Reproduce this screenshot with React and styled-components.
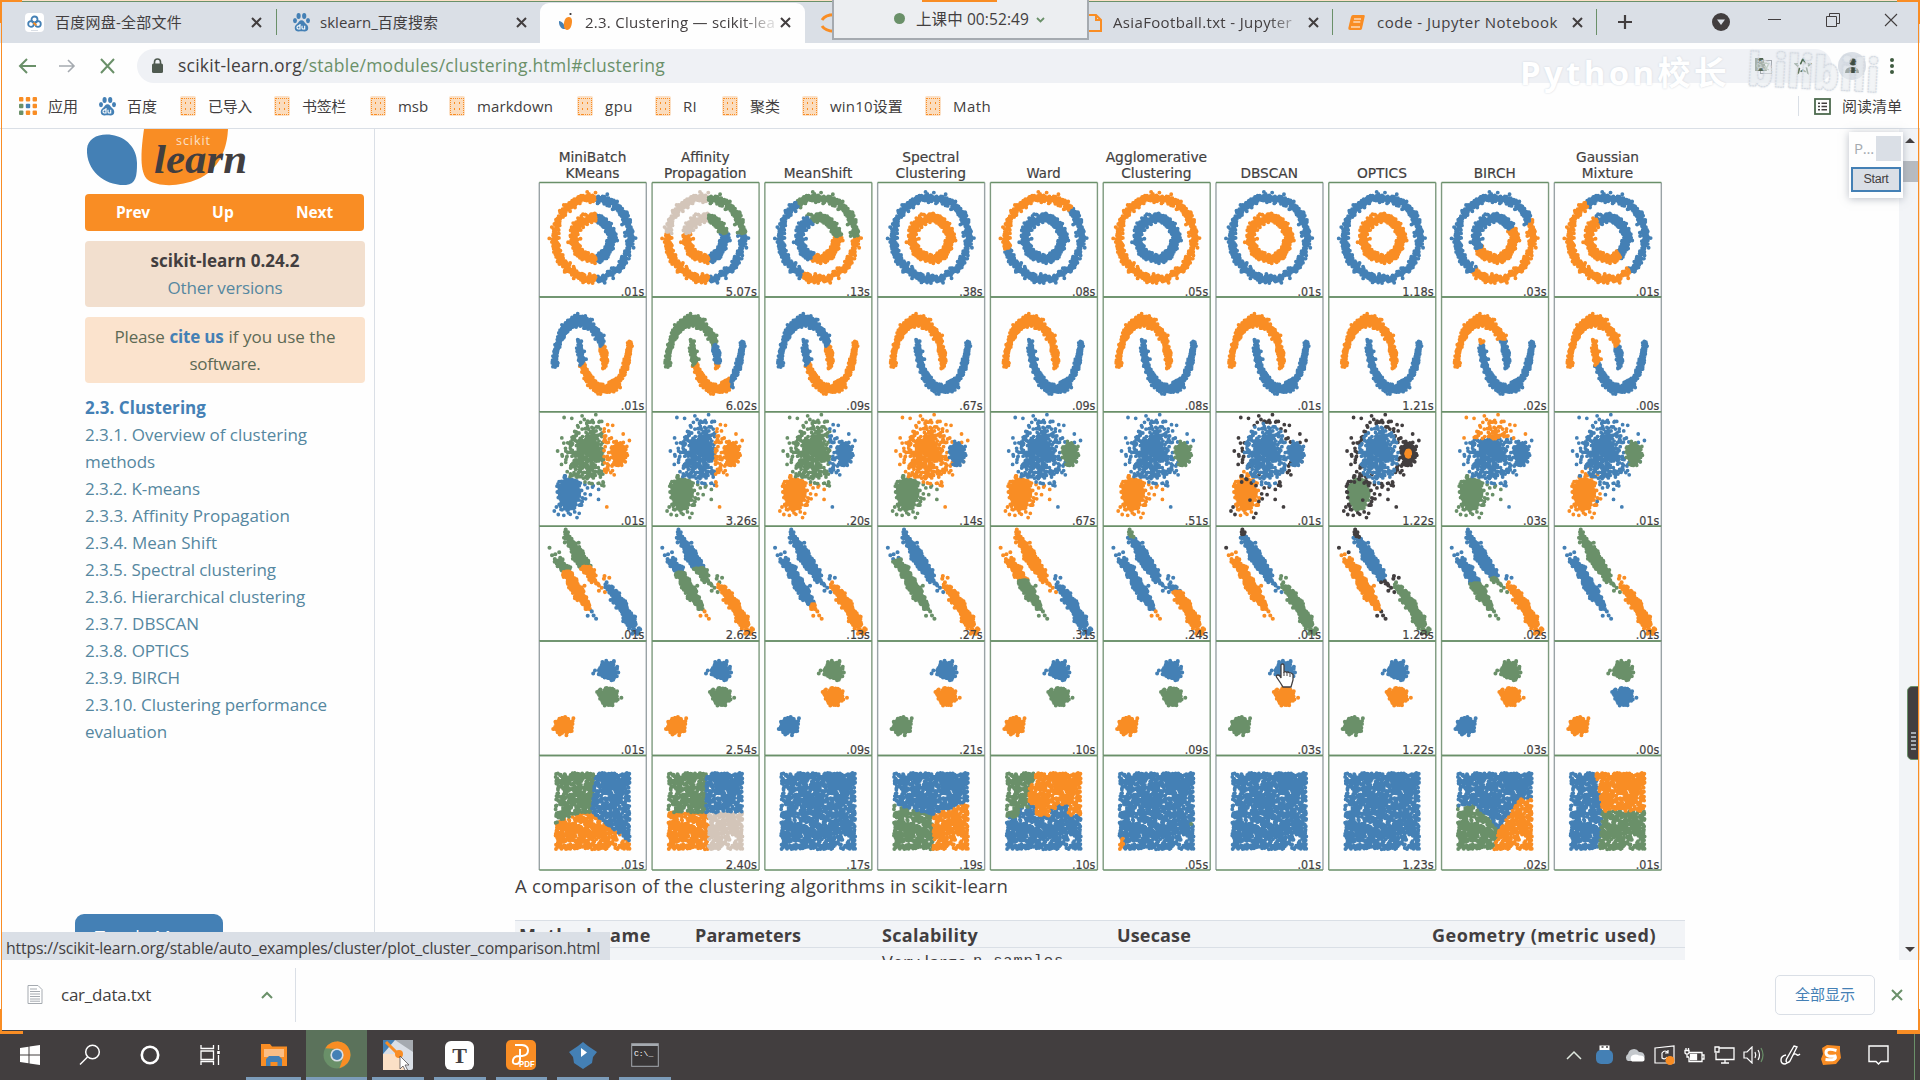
import React, { useLayoutEffect, useRef, useState } from "react";
import styled, { createGlobalStyle, css } from "styled-components";

const c = {
  white: "#fefefe",
  strip: "#dadfe6",
  pale: "#eff1f5",
  faint: "#f2f4f7",
  line: "#dadfe6",
  grey: "#a5aab0",
  ink: "#423e3f",
  blue: "#4480b5",
  orange: "#f98d24",
  green: "#6a9069",
  peach: "#fbe0c6",
  link: "#5587a0",
  noise: "#d3c5b9",
};

const Global = createGlobalStyle`
  * { box-sizing: border-box; }
  body {
    margin: 0;
    width: 1920px;
    height: 1080px;
    overflow: hidden;
    color: ${c.ink};
    font-family: "Open Sans", "Noto Sans CJK SC", sans-serif;
  }
`;

/* ---------- text that keeps a fixed run width ---------- */

const Run = styled.span`
  display: inline-block;
  white-space: nowrap;
  line-height: 1;
  flex: none;
  font-size: ${(p) => p.$size || 15}px;
  font-weight: ${(p) => (p.$bold ? 700 : 400)};
  color: ${(p) => p.$color || "inherit"};
  font-family: ${(p) => p.$font || "inherit"};
`;

function Fit({ w, children, size, bold, color, font }) {
  const ref = useRef(null);
  const [spacing, setSpacing] = useState(0);
  useLayoutEffect(() => {
    const el = ref.current;
    const n = el.textContent.length;
    setSpacing((w - el.getBoundingClientRect().width) / n);
  }, [w]);
  return (
    <Run ref={ref} $size={size} $bold={bold} $color={color} $font={font} style={{ letterSpacing: spacing }}>
      {children}
    </Run>
  );
}

/* ---------- window frame ---------- */

const Screen = styled.div`
  position: relative;
  width: 1920px;
  height: 1080px;
  overflow: hidden;
  display: flex;
  flex-direction: column;
  background: ${c.white};
`;

const TabStrip = styled.div`
  height: 43px;
  flex: none;
  display: flex;
  background: ${c.strip};
  border-top: 1px solid ${c.peach};
  box-shadow: inset 0 1px 0 ${c.green};
`;

const Tab = styled.div`
  width: ${(p) => p.$w}px;
  flex: none;
  padding: 1px ${(p) => p.$pr || 12}px 0 ${(p) => p.$pl || 16}px;
  display: flex;
  align-items: center;
  border-right: 1px solid ${(p) => (p.$line ? c.green : "transparent")};
  border-image: ${(p) => (p.$line ? `linear-gradient(transparent 20%, ${c.green} 20%, ${c.green} 80%, transparent 80%) 1` : "none")};
  ${(p) =>
    p.$active &&
    css`
      background: ${c.white};
      border-radius: 9px 9px 0 0;
      margin-top: 2px;
      padding-top: 0;
      padding-bottom: 1px;
    `}
`;

const TabIcon = styled.span`
  width: ${(p) => p.$w || 19}px;
  height: 19px;
  margin-right: ${(p) => p.$gap || 11}px;
  flex: none;
  display: flex;
  align-items: center;
  justify-content: center;
`;

const TabTitle = styled.span`
  flex: 1;
  display: flex;
  overflow: hidden;
  padding: 4px 0;
  mask-image: ${(p) => (p.$fade ? "linear-gradient(90deg, #000 80%, rgba(0,0,0,.2) 95%)" : "none")};
`;

const StripControls = styled.div`
  flex: 1;
  min-width: 0;
  display: grid;
  grid-template-columns: 56px 136px minmax(0, 1fr);
  justify-items: center;
  align-items: center;
`;

const WindowButtons = styled.div`
  width: 130px;
  display: flex;
  justify-content: space-between;
  align-items: center;
  justify-self: end;
  margin-right: 22px;
  padding-bottom: 4px;
`;

const Toolbar = styled.div`
  height: 43px;
  flex: none;
  display: flex;
  align-items: center;
  padding: 2px 20px 0 17px;
`;

const NavButtons = styled.div`
  display: flex;
  gap: 20px;
  width: 120px;
`;

const Address = styled.div`
  width: 1695px;
  height: 34px;
  border-radius: 17px;
  background: ${c.pale};
  display: flex;
  align-items: center;
  padding: 0 20px 0 13px;
`;

const Url = styled.div`
  flex: 1;
  display: flex;
  margin-left: 14px;
`;

const AddressActions = styled.div`
  display: flex;
  gap: 22px;
`;

const ToolbarEnd = styled.div`
  flex: 1;
  display: flex;
  align-items: center;
  justify-content: space-between;
  padding-left: 6px;
`;

const Avatar = styled.div`
  width: 28px;
  height: 28px;
  border-radius: 50%;
  background: ${c.strip};
  display: flex;
  align-items: center;
  justify-content: center;
`;

const Bookmarks = styled.div`
  height: 43px;
  flex: none;
  display: flex;
  align-items: center;
  padding: 0 18px 2px 19px;
  border-bottom: 1px solid ${c.line};
`;

const Bookmark = styled.div`
  width: ${(p) => p.$w}px;
  display: flex;
  align-items: center;
`;

const MarkIcon = styled.span`
  width: ${(p) => p.$w || 28}px;
  display: flex;
  flex: none;
`;

const Folder = styled.i`
  width: 16px;
  height: 20px;
  background: ${c.peach};
  border-radius: 2px;
  display: flex;
  align-items: center;
  justify-content: center;
  &::after {
    content: "";
    width: 12px;
    height: 15px;
    border: 1px dotted ${c.orange};
    background: radial-gradient(${c.orange} 0.5px, #fbdcbd 0.8px) 1px 1px / 5px 6px;
  }
`;

const ReadingList = styled.div`
  margin-left: auto;
  width: 104px;
  height: 20px;
  border-left: 1px solid ${c.line};
  display: flex;
  align-items: center;
  justify-content: space-between;
  padding-left: 15px;
`;

/* ---------- page ---------- */

const Page = styled.main`
  height: 831px;
  flex: none;
  display: flex;
  overflow: hidden;
`;

const Sidebar = styled.aside`
  width: 375px;
  border-right: 1px solid ${c.line};
  padding: 0 9px 0 85px;
  display: flex;
  flex-direction: column;
`;

const Logo = styled.div`
  height: 65px;
  flex: none;
`;

const Pager = styled.nav`
  height: 37px;
  width: 279px;
  flex: none;
  border-radius: 4px;
  background: ${c.orange};
  display: flex;
  align-items: center;
  justify-content: space-between;
  padding: 1px 31px 0;
`;

const Notice = styled.div`
  width: 280px;
  height: ${(p) => p.$h}px;
  flex: none;
  margin-top: 10px;
  border-radius: 4px;
  background: ${(p) => p.$bg};
  display: flex;
  flex-direction: column;
  align-items: center;
  justify-content: center;
`;

const Line = styled.div`
  height: 27px;
  flex: none;
  display: flex;
  align-items: center;
  gap: ${(p) => p.$gap || 0}px;
`;

const Toc = styled.div`
  margin-top: 11px;
`;

const MenuToggle = styled.div`
  margin: auto 0 0 -10px;
  width: 148px;
  height: 46px;
  flex: none;
  border-radius: 9px 9px 0 0;
  background: ${c.blue};
  color: ${c.white};
  display: flex;
  align-items: center;
  justify-content: center;
`;

const Article = styled.section`
  width: 1524px;
  padding: 11px 0 0 140px;
  display: flex;
  flex-direction: column;
`;

const Figure = styled.svg`
  display: block;
  flex: none;
  margin-left: 18px;
`;

const Caption = styled.div`
  height: 48px;
  flex: none;
  padding-top: 4px;
`;

const Table = styled.div`
  width: 1170px;
  flex: none;
`;

const Row = styled.div`
  display: grid;
  grid-template-columns: 176px 187px 235px 315px 1fr;
  height: 27px;
  align-items: center;
  padding: 2px 0 0 4px;
  border-top: 1px solid ${c.line};
  background: ${c.faint};
`;

const Cell = styled.div`
  grid-column: ${(p) => p.$col || "auto"};
  display: flex;
  align-items: center;
  gap: 6px;
`;

const Scroll = styled.div`
  width: 21px;
  background: ${c.faint};
  border-right: 2px solid ${c.peach};
  display: flex;
  flex-direction: column;
  align-items: center;
  padding: 9px 0 8px 3px;
`;

const Thumb = styled.div`
  width: 15px;
  height: 21px;
  margin: 18px 0 auto;
  background: #b7bbc1;
`;

const Arrow = styled.i`
  border: 5px solid transparent;
  border-width: ${(p) => (p.$down ? "5px 5px 0" : "0 5px 5px")};
  border-color: ${c.ink} transparent;
`;

/* ---------- download shelf + taskbar ---------- */

const Shelf = styled.footer`
  height: 70px;
  flex: none;
  display: flex;
  align-items: center;
  padding: 0 17px 0 27px;
`;

const Download = styled.div`
  width: 269px;
  height: 54px;
  border-right: 1px solid ${c.line};
  display: flex;
  align-items: center;
  padding: 0 22px 1px 0;
  gap: 18px;
  & > :last-child {
    margin-left: auto;
  }
`;

const ShowAll = styled.button`
  margin: 0 16px 0 auto;
  width: 100px;
  height: 40px;
  border: 1px solid ${c.line};
  border-radius: 5px;
  background: ${c.white};
  padding: 0;
  font-family: inherit;
`;

const Taskbar = styled.div`
  height: 50px;
  flex: none;
  background: ${c.ink};
  display: flex;
  padding-right: 5px;
`;

const Task = styled.div`
  width: ${(p) => p.$w || 61.8}px;
  height: 50px;
  display: flex;
  align-items: center;
  justify-content: center;
  position: relative;
  background: ${(p) => (p.$active ? "#5b725b" : "transparent")};
  ${(p) =>
    p.$open &&
    css`
      &::after {
        content: "";
        position: absolute;
        bottom: 0;
        left: ${p.$active ? 0 : 5}px;
        right: ${p.$active ? 0 : 5}px;
        height: 3px;
        background: #7c9cba;
      }
    `}
`;

const Tray = styled.div`
  margin-left: auto;
  display: grid;
  grid-template-columns: 30px 30px 30px 30px 30px 30px 30px 42px 40px 54px 9px;
  align-items: center;
  justify-items: center;
  border-right: 1px solid ${c.green};
`;

/* ---------- floating layers ---------- */

const Edge = styled.i`
  position: absolute;
  background: ${(p) => p.$bg || c.orange};
  left: ${(p) => p.$x}px;
  top: ${(p) => p.$y}px;
  width: ${(p) => p.$w}px;
  height: ${(p) => p.$h}px;
`;

const Meeting = styled.div`
  position: absolute;
  left: 832px;
  top: 0;
  width: 257px;
  height: 40px;
  background: #eceef1;
  border: 2px solid ${c.grey};
  border-top-width: 0;
  display: flex;
  align-items: center;
  padding: 2px 0 0 60px;
  &::before {
    content: "";
    position: absolute;
    left: 88px;
    top: 0;
    width: 75px;
    height: 2px;
    background: ${c.orange};
  }
`;

const Dot = styled.i`
  width: 11px;
  height: 11px;
  border-radius: 50%;
  background: ${c.green};
  margin: 0 11px 3px 0;
`;

const MeetingArrow = styled.span`
  display: flex;
  margin-left: 7px;
`;

const Status = styled.div`
  position: absolute;
  left: 2px;
  top: 932px;
  width: 608px;
  height: 28px;
  background: ${c.strip};
  padding: 5px 0 0 4px;
  display: flex;
  align-items: center;
`;

const Starter = styled.div`
  position: absolute;
  left: 1849px;
  top: 132px;
  width: 54px;
  height: 66px;
  background: ${c.white};
  box-shadow: 0 1px 8px rgba(120, 130, 145, 0.5);
  display: flex;
  flex-direction: column;
  padding: 4px 2px 6px;
  justify-content: space-between;
`;

const StarterHead = styled.div`
  display: flex;
  justify-content: space-between;
  align-items: center;
  padding-left: 3px;
  &::after {
    content: "";
    width: 25px;
    height: 25px;
    background: ${c.strip};
  }
`;

const StartButton = styled.div`
  height: 25px;
  border: 2px solid ${c.blue};
  background: ${c.strip};
  display: flex;
  align-items: center;
  justify-content: center;
`;

const SideHandle = styled.div`
  position: absolute;
  left: 1907px;
  top: 686px;
  width: 12px;
  height: 74px;
  border-radius: 5px 0 0 5px;
  background: ${c.ink};
  border: 1px solid ${c.green};
  display: flex;
  align-items: flex-end;
  justify-content: center;
  padding-bottom: 8px;
  &::after {
    content: "";
    width: 5px;
    height: 19px;
    background: repeating-linear-gradient(${c.grey} 0 2px, ${c.ink} 2px 4px);
  }
`;

const Watermark = styled.div`
  position: absolute;
  left: 1520px;
  top: 36px;
  display: flex;
  gap: 14px;
  align-items: center;
  color: #fff;
  text-shadow: 0 0 2px #ccd3dc;
`;

const Overlay = styled.svg`
  position: absolute;
  left: ${(p) => p.$x}px;
  top: ${(p) => p.$y}px;
`;

/* ---------- icons ---------- */

const Svg = ({ w, h = w, vb, children, ...p }) => (
  <svg width={w} height={h} viewBox={vb || `0 0 ${w} ${h}`} fill="none" {...p}>
    {children}
  </svg>
);
const Cross = ({ s = 11, color = c.ink, sw = 2 }) => (
  <Svg w={s} stroke={color} strokeWidth={sw}>
    <path d={`M1 1L${s - 1} ${s - 1}M${s - 1} 1L1 ${s - 1}`} />
  </Svg>
);
const Paw = ({ s = 17 }) => (
  <Svg w={s} h={19} vb="0 0 17 19">
    <g fill={c.blue}>
      <ellipse cx="5.6" cy="3" rx="2.1" ry="2.9" />
      <ellipse cx="11.2" cy="3" rx="2.1" ry="2.9" />
      <ellipse cx="2" cy="7.6" rx="2" ry="2.6" />
      <ellipse cx="15" cy="7.6" rx="2" ry="2.6" />
      <path d="M8.500 7.200c2.200 0 3 2.200 4.300 3.500 1.600 1.400 2.700 2.600 2.400 4.900-.3 2.300-2 3.100-3.700 3-1.200-.1-2-.3-3-.3s-1.800.2-3 .3c-1.700.1-3.400-.7-3.700-3-.3-2.300.8-3.500 2.400-4.900 1.300-1.300 2.100-3.500 4.300-3.500z" />
    </g>
    <path d="M7 11v5H5.300q-1.300-.3-1.300-1.600t1.300-1.500H7M9 12.800v2.200q0 1 1 1h1.700v-3.200" stroke="#fff" strokeWidth="1.1" />
  </Svg>
);
const Drive = () => (
  <Svg w={19}>
    <rect width="19" height="19" rx="4" fill="#fff" />
    <circle cx="9.5" cy="6.5" r="3" stroke={c.blue} strokeWidth="1.8" />
    <circle cx="6" cy="11" r="2.8" stroke={c.blue} strokeWidth="1.8" />
    <circle cx="13" cy="11" r="2.8" stroke={c.blue} strokeWidth="1.8" />
    <path d="M8.500 9.800l2.800 2.500" stroke={c.orange} strokeWidth="2" />
    <path d="M6 17.500h7" stroke={c.strip} />
  </Svg>
);
const Sk = () => (
  <Svg w={15} h={19}>
    <path d="M0 8c3 .500 6 3 6 8C3 16.500-.500 13 0 8z" fill={c.blue} />
    <path d="M7 5c3-2 6-1 6 3 0 5-2 9-5 9-4 0-4-9-1-12z" fill={c.orange} />
    <path d="M11.500 0v2" stroke={c.ink} strokeWidth="1.8" />
  </Svg>
);
const Doc = () => (
  <Svg w={15} h={18} stroke={c.orange} strokeWidth="2">
    <path d="M1 1h8l5 5v11H1zM9 1v5h5" />
  </Svg>
);
const Book = () => (
  <Svg w={17} h={16}>
    <path d="M5 0h11q1 0 .700 1.500L14 13.500q-.400 1.500-2 1.500H2q-2 0-1.700-2L3 2q.500-2 2-2z" fill={c.orange} />
    <path d="M6 4h7M5.300 7h7M3 12h9" stroke="#fff" strokeWidth="1.1" />
  </Svg>
);
const TextFile = () => (
  <Svg w={16} h={19}>
    <path d="M1 .500h10l4 4v14H1z" stroke={c.grey} fill="#fff" />
    <path d="M3 4h7M3 6.500h10M3 9h10M3 11.500h10M3 14h10M3 16.200h10" stroke={c.grey} />
  </Svg>
);
const Apps = () => (
  <Svg w={18} h={18}>
    {[0, 1, 2].map((i) =>
      [0, 1, 2].map((j) => (
        <rect key={`${i}${j}`} x={i * 6.8} y={j * 6.8} width="4.4" height="4.4" rx="1"
          fill={j === 0 ? c.orange : i === 0 ? c.green : i === 1 && j === 1 ? c.blue : c.orange} />
      ))
    )}
  </Svg>
);

/* ---------- clustering figure ---------- */

function makeRandom(seed) {
  let s = seed;
  const next = () => {
    s = (s + 0x6d2b79f5) | 0;
    let t = Math.imul(s ^ (s >>> 15), 1 | s);
    t = (t + Math.imul(t ^ (t >>> 7), 61 | t)) ^ t;
    return ((t ^ (t >>> 14)) >>> 0) / 4294967296;
  };
  const gauss = () => Math.sqrt(-2 * Math.log(next() + 1e-9)) * Math.cos(2 * Math.PI * next());
  return { next, gauss };
}

const CW = 107;
const CH = 114.6;
const N = 500;
const times = (n, f) => Array.from({ length: n }, (_, i) => f(i));

const circles = (() => {
  const r = makeRandom(7);
  return times(1500, (i) => {
    const g = i % 2;
    const t = (i / 1500) * 2 * Math.PI;
    const k = g ? 0.5 : 1;
    return { g, x: 53.5 + 37.6 * (k * Math.cos(t) + 0.05 * r.gauss()), y: 55.7 + 40.8 * (k * Math.sin(t) + 0.05 * r.gauss()) };
  });
})();

const moons = (() => {
  const r = makeRandom(11);
  return times(1500, (i) => {
    const g = i % 2;
    const t = (i / 1500) * Math.PI;
    const mx = g ? 1 - Math.cos(t) : Math.cos(t);
    const my = g ? 0.5 - Math.sin(t) : Math.sin(t);
    return { g, x: 40.3 + 24.8 * (mx + 0.052 * r.gauss()), y: 68.7 - 45.5 * (my + 0.052 * r.gauss()) };
  });
})();

const blobSet = (seed, defs) => {
  const r = makeRandom(seed);
  return defs.flatMap(([cx, cy, sx, sy], g) =>
    times(N, () => {
      const u = r.gauss();
      const v = r.gauss();
      return { g, d: Math.hypot(u, v), x: cx + sx * u, y: cy + sy * v };
    })
  );
};

const varied = blobSet(21, [[30, 82.5, 5.3, 8], [50, 43, 11, 16], [79.5, 42, 2.8, 4.2]]);
const blobs = blobSet(5, [[67.5, 29.7, 3.6, 3.4], [69, 54.7, 3.5, 3.3], [23.8, 84.7, 3.7, 3.3]]);

const strips = (() => {
  const r = makeRandom(33);
  return [[41.5, 32.5], [34.5, 57.5], [84, 82.5]].flatMap(([cx, cy], g) =>
    times(N, () => {
      const a = r.gauss() * 12.8;
      const p = r.gauss() * 2.1;
      return { g, x: cx + a * 0.53 + p * 0.848, y: cy + a * 0.848 - p * 0.53 };
    })
  );
})();

const square = (() => {
  const r = makeRandom(99);
  return times(1500, () => ({ g: 0, x: 16.2 + r.next() * 74.2, y: 17.4 + r.next() * 76.4 }));
})();

const { blue: B, orange: O, green: G, ink: K, noise: P } = c;
const group = (...cols) => (p) => cols[p.g];
const low = (p) => p.y > 67 + (p.x - 35) * 0.35 && p.x < 62;
const moonCut = (a, b) => (p) => (p.y < 66 - (p.x - 43) * 0.93 ? a : b);

const rows = [
  {
    pts: circles,
    times: [".01s", "5.07s", ".13s", ".38s", ".08s", ".05s", ".01s", "1.18s", ".03s", ".01s"],
    paint: [
      (p) => (p.x < 56.5 ? O : B),
      (p) => (p.y < 51 ? (p.x < 56.5 ? P : G) : p.x < 56.5 ? O : B),
      (p) => (p.y < 54 ? (p.x > 58 + (p.y - 54) * 0.8 ? G : B) : p.x > 58 - (p.y - 54) * 0.55 ? O : B),
      group(B, O),
      (p) => (p.g ? B : p.y < 67 - (p.x - 16) * 0.63 ? O : B),
      group(O, B),
      group(B, O),
      group(B, O),
      (p) => (p.g ? (p.y > 45 - 0.63 * (p.x - 70.3) ? O : B) : p.y > 37.7 - 0.873 * (p.x - 88.8) ? O : B),
      (p) => (p.x < 34 + (p.y - 24.4) * 0.64 ? O : B),
    ],
  },
  {
    pts: moons,
    times: [".01s", "6.02s", ".09s", ".67s", ".09s", ".08s", ".01s", "1.21s", ".02s", ".00s"],
    paint: [
      moonCut(B, O),
      (p) => (p.y < 66 - (p.x - 43) * 0.93 ? G : p.g ? (p.x > 79 ? B : O) : p.y < 66 ? B : O),
      moonCut(B, O),
      group(O, B), group(O, B), group(O, B), group(O, B), group(O, B),
      (p) => (p.g ? (p.x < 46 && p.y < 47 ? O : B) : p.x < 50 || p.y < 42 ? O : B),
      moonCut(O, B),
    ],
  },
  {
    pts: varied,
    times: [".01s", "3.26s", ".20s", ".14s", ".67s", ".51s", ".01s", "1.22s", ".03s", ".01s"],
    paint: [
      (p) => (p.x > 64.5 ? O : low(p) ? B : G),
      (p) => (p.x > 63 ? O : low(p) ? G : B),
      (p) => (p.x > 65 ? B : low(p) ? O : G),
      (p) => (p.g === 2 ? B : low(p) ? G : O),
      (p) => (p.g === 2 ? G : low(p) ? O : B),
      (p) => (p.g === 2 ? G : low(p) ? O : B),
      (p) => (p.g === 2 ? B : p.g === 0 ? (p.d > 2.9 ? K : O) : p.d > 2 ? K : B),
      (p) => (p.g === 2 ? (p.d < 0.8 ? O : K) : p.g === 0 ? (p.d > 2.1 ? K : G) : p.d > 1.8 ? K : B),
      (p) => (p.g === 2 ? B : p.y < 27 ? O : low(p) ? G : B),
      (p) => (p.g === 2 ? G : p.g === 0 || (low(p) && Math.hypot((p.x - 30) / 5.3, (p.y - 82.5) / 8) < 2.2) ? O : B),
    ],
  },
  {
    pts: strips,
    times: [".01s", "2.62s", ".13s", ".27s", ".31s", ".24s", ".01s", "1.23s", ".02s", ".01s"],
    paint: [
      (p) => (p.g === 0 ? (p.y < 40.5 ? G : O) : p.g === 1 ? (p.y < 45 ? G : p.y < 84 ? O : B) : p.y < 56 ? O : B),
      (p) => (p.g === 0 ? (p.y < 42 ? B : G) : p.g === 1 ? (p.y < 46 ? B : p.y < 85 ? G : O) : p.y < 57 ? G : O),
      (p) => (p.g === 0 ? B : p.g === 1 ? (p.y < 78 ? B : O) : p.y < 55 ? B : O),
      (p) => (p.g === 0 ? B : p.g === 1 ? (p.y < 33 ? B : G) : O),
      (p) => (p.g === 0 ? O : p.g === 1 ? (p.y < 54 ? O : G) : B),
      (p) => (p.g === 0 ? (p.y < 11 ? G : B) : p.g === 1 ? (p.y < 85 ? B : O) : p.y < 65 ? B : O),
      (p) => (p.g === 0 ? (p.y < 8 ? K : B) : p.g === 1 ? (p.y < 25 ? K : O) : G),
      (p) => (p.g === 0 ? (p.y < 11 || p.y > 55 ? K : B) : p.g === 1 ? (p.y < 26 || p.y > 84 ? K : O) : p.y < 55 || p.y > 107 ? K : G),
      (p) => (p.g === 0 ? (p.y < 51 ? B : G) : p.g === 1 ? (p.y < 57 ? B : G) : p.y < 53 ? B : O),
      group(G, B, O),
    ],
  },
  {
    pts: blobs,
    times: [".01s", "2.54s", ".09s", ".21s", ".10s", ".09s", ".03s", "1.22s", ".03s", ".00s"],
    paint: [
      group(B, G, O), group(B, G, O), group(G, O, B), group(B, O, G), group(B, G, O),
      group(B, G, O), group(B, O, G), group(B, O, G), group(G, O, B), group(G, B, O),
    ],
  },
  {
    pts: square,
    times: [".01s", "2.40s", ".17s", ".19s", ".10s", ".05s", ".01s", "1.23s", ".02s", ".01s"],
    paint: [
      ({ x, y }) => {
        const floor = x < 41 ? 68 - (x - 15.5) * 0.44 : x < 54 ? 57 : 59 + (x - 55) * 0.78;
        return y > floor ? O : x < 56.6 - (y - 16) * 0.11 ? G : B;
      },
      ({ x, y }) => (y < 57 ? (x < 54 ? G : B) : x < 56.5 ? O : P),
      group(B),
      ({ x, y }) => (y < (x < 55 ? 49 + (x - 17) * 0.26 : 59 - (x - 55) * 0.36) ? B : x < 55.5 ? G : O),
      ({ x, y }) => {
        const wall = y < 34 ? 47 - (y - 16) * 0.47 : 38.5;
        if (x < wall && y < (x < 28 ? 62 : 52)) return G;
        if (x < wall) return B;
        return y < (x < 46 ? 48 : x < 60 ? 60 : x < 65 ? 53 : x < 78 ? 49 : 60) ? O : B;
      },
      ({ x, y }) => (x < 21 && y > 83 ? O : x > 88 && y > 65 && y < 69 ? G : B),
      group(B),
      group(B),
      ({ x, y }) => {
        const wall = y > 74 ? 58 - (y - 74) * 0.3 : 58 + (74 - y) * 0.65;
        if (y > 43 && x > wall) return O;
        return y > (x < 35 ? 50 : 50 + (x - 35) * 1.04) ? G : B;
      },
      ({ x, y }) => (x < (y < 55 ? 41 + (y - 16) * 0.18 : 48 - (y - 55) * 0.08) ? B : y < 55.5 ? O : G),
    ],
  },
];

const titles = [
  [["MiniBatch", 67.7], ["KMeans", 54]], [["Affinity", 48.5], ["Propagation", 82.5]], [["MeanShift", 68.5]],
  [["Spectral", 57], ["Clustering", 70.5]], [["Ward", 34]], [["Agglomerative", 101.5], ["Clustering", 70.5]],
  [["DBSCAN", 57.5]], [["OPTICS", 50]], [["BIRCH", 42]], [["Gaussian", 63], ["Mixture", 51.5]],
];

const dotSize = [3.9, 3.8, 3.8, 4.1, 4, 3.9];

function Panel({ row, col, x, y }) {
  const { pts, paint, times: labels } = rows[row];
  const layers = new Map();
  for (const p of pts) {
    if (p.x < 1 || p.x > CW - 1 || p.y < 1 || p.y > CH - 1) continue;
    const k = paint[col](p);
    layers.set(k, (layers.get(k) || "") + `M${p.x.toFixed(1)} ${p.y.toFixed(1)}h.01`);
  }
  const label = labels[col];
  const lw = label.length === 5 ? 31.4 : 23.5;
  return (
    <g transform={`translate(${x} ${y})`}>
      {[...layers].map(([k, d]) => (
        <path key={k} d={d} stroke={k} strokeWidth={dotSize[row]} strokeLinecap="round" />
      ))}
      <path d={`M0 0V${CH}M${CW} 0V${CH}`} stroke={col % 3 ? "#7d9a7e" : "#9aa3a6"} strokeWidth="1.4" />
      <path d={`M0 0H${CW}M0 ${CH}H${CW}`} stroke={c.green} strokeWidth="1.5" />
      <text x={CW - 2} y={CH - 1.6} textAnchor="end" textLength={lw} lengthAdjust="spacingAndGlyphs" fontSize="12.8" fill={c.ink} stroke={c.ink} strokeWidth="0.2">
        {label}
      </text>
    </g>
  );
}

const Comparison = () => (
  <Figure width="1132" height="732" viewBox="533 140 1132 732" fill="none" fontFamily='"DejaVu Sans", sans-serif'>
    {titles.map((lines, col) =>
      lines.map(([t, w], i) => (
        <text key={`${t}${i}`} x={539 + col * 112.78 + CW / 2} y={178 - (lines.length - 1 - i) * 16} textAnchor="middle"
          textLength={w} lengthAdjust="spacingAndGlyphs" fontSize="14.4" fill={c.ink} stroke={c.ink} strokeWidth="0.2">
          {t}
        </text>
      ))
    )}
    {rows.map((_, row) =>
      titles.map((__, col) => (
        <Panel key={`${row}-${col}`} row={row} col={col} x={539.3 + col * 112.78} y={182.5 + row * 114.6} />
      ))
    )}
  </Figure>
);

/* ---------- content data ---------- */

const marks = [
  ["已导入", 94, 44], ["书签栏", 96, 44], ["msb", 79, 30], ["markdown", 128, 76], ["gpu", 78, 28],
  ["RI", 67, 14], ["聚类", 80, 30], ["win10设置", 123, 73], ["Math", 80, 38],
];

const toc = [
  ["2.3.1. Overview of clustering", 222], ["methods", 70], ["2.3.2. K-means", 115], ["2.3.3. Affinity Propagation", 205],
  ["2.3.4. Mean Shift", 132], ["2.3.5. Spectral clustering", 191], ["2.3.6. Hierarchical clustering", 220],
  ["2.3.7. DBSCAN", 114], ["2.3.8. OPTICS", 104], ["2.3.9. BIRCH", 95], ["2.3.10. Clustering performance", 242], ["evaluation", 82],
];

const heads = [["Method name", 132], ["Parameters", 106], ["Scalability", 96], ["Usecase", 74], ["Geometry (metric used)", 224]];

export default function App() {
  return (
    <Screen>
      <Global />
      <TabStrip>
        <Tab $w={277} $pl={25} $pr={14} $line>
          <TabIcon><Drive /></TabIcon>
          <TabTitle><Fit w={127}>百度网盘-全部文件</Fit></TabTitle>
          <Cross />
        </Tab>
        <Tab $w={263} $pl={15} $pr={12}>
          <TabIcon $gap={9}><Paw /></TabIcon>
          <TabTitle><Fit w={118}>sklearn_百度搜索</Fit></TabTitle>
          <Cross />
        </Tab>
        <Tab $w={265} $pl={18} $pr={13} $active>
          <TabIcon $w={16}><Sk /></TabIcon>
          <TabTitle $fade><Fit w={190}>2.3. Clustering — scikit-lea</Fit></TabTitle>
          <Cross />
        </Tab>
        <Tab $w={267} $pl={15}>
          <Svg w={18} h={20} stroke={c.orange} strokeWidth="3"><path d="M17 2Q6 1 2 7M2 13q4 6 15 5" /></Svg>
        </Tab>
        <Tab $w={261} $pl={15} $pr={13} $line>
          <TabIcon $w={15}><Doc /></TabIcon>
          <TabTitle $fade><Fit w={179}>AsiaFootball.txt - Jupyter</Fit></TabTitle>
          <Cross />
        </Tab>
        <Tab $w={264} $pl={14} $pr={13} $line>
          <TabIcon $w={18} $gap={12}><Book /></TabIcon>
          <TabTitle><Fit w={181}>code - Jupyter Notebook</Fit></TabTitle>
          <Cross />
        </Tab>
        <StripControls>
          <Svg w={14} stroke={c.ink} strokeWidth="2.2"><path d="M7 0v14M0 7h14" /></Svg>
          <Svg w={18}><circle cx="9" cy="9" r="9" fill={c.ink} /><path d="M5 6.500h8L9 12z" fill={c.strip} /></Svg>
          <WindowButtons>
            <Svg w={13} h={6} stroke={c.ink}><path d="M0 2.500h13" /></Svg>
            <Svg w={14} stroke={c.ink}><path d="M.500 3.500h10v10H.500zM3.500 3V.500h10v10H11" /></Svg>
            <Cross s={14} sw={1.1} />
          </WindowButtons>
        </StripControls>
      </TabStrip>

      <Toolbar>
        <NavButtons>
          <Svg w={20} stroke={c.green} strokeWidth="2"><path d="M19 10H3M10 3l-7 7 7 7" /></Svg>
          <Svg w={20} stroke={c.grey} strokeWidth="1.6"><path d="M2 10h15M11 4l6 6-6 6" /></Svg>
          <Svg w={20} stroke={c.green} strokeWidth="2"><path d="M4 3l13 14M17 3L4 17" /></Svg>
        </NavButtons>
        <Address>
          <Svg w={14} h={15}><rect x="2" y="5.5" width="11" height="9.5" rx="1.5" fill="#4f5a50" /><path d="M4.500 6V4a3 3 0 016 0v2" stroke="#4f5a50" strokeWidth="1.6" /></Svg>
          <Url>
            <Fit w={124} size={17.5}>scikit-learn.org</Fit>
            <Fit w={363} size={17.5} color={c.green}>/stable/modules/clustering.html#clustering</Fit>
          </Url>
          <AddressActions>
            <Svg w={18} h={18}>
              <rect x="6.5" y="3.5" width="11" height="13" stroke={c.grey} />
              <path d="M1 1h8l4 13H1z" fill="#4b5f4c" />
              <path d="M8.500 6.500h7M12 5v2M9.500 13q4-2 5-6M10 9q2 3 5 4M3.500 7.500a2 2 0 103 0H5" stroke="#8fa690" strokeWidth="1.2" />
            </Svg>
            <Svg w={18} h={18}><path d="M9 1.500l2.200 5 5.300.500-4 3.600 1.200 5.400L9 13.200 4.300 16l1.200-5.400-4-3.600 5.300-.500z" stroke="#4d6a4e" strokeWidth="1.6" strokeDasharray="6 2" /></Svg>
          </AddressActions>
        </Address>
        <ToolbarEnd>
          <Avatar><Svg w={14} h={16}><circle cx="8" cy="4" r="3.6" fill="#3d4b3f" /><path d="M0 15q0-6 7-6t7 6z" fill="#3d4b3f" /></Svg></Avatar>
          <Svg w={16} h={18}><g fill="#3f5c40"><circle cx="8" cy="3" r="2" /><circle cx="8" cy="9" r="2" /><circle cx="8" cy="15" r="2" /></g></Svg>
        </ToolbarEnd>
      </Toolbar>

      <Bookmarks>
        <Bookmark $w={80}><MarkIcon $w={29}><Apps /></MarkIcon><Fit w={30}>应用</Fit></Bookmark>
        <Bookmark $w={81}><MarkIcon $w={28}><Paw /></MarkIcon><Fit w={30}>百度</Fit></Bookmark>
        {marks.map(([t, w, tw]) => (
          <Bookmark key={t} $w={w}><MarkIcon><Folder /></MarkIcon><Fit w={tw}>{t}</Fit></Bookmark>
        ))}
        <ReadingList>
          <Svg w={17} h={17}><rect x="1" y="1" width="15" height="15" stroke="#4d6a4e" strokeWidth="1.8" /><path d="M4 5.200h2M4 8.500h2M4 11.800h2M7.500 5.200H13M7.500 8.500H13M7.500 11.800H13" stroke={c.ink} strokeWidth="1.4" /></Svg>
          <Fit w={60}>阅读清单</Fit>
        </ReadingList>
      </Bookmarks>

      <Page>
        <Sidebar>
          <Logo>
            <Svg w={170} h={58}>
              <path d="M2 20C3 9 14 4 27 6c14 2 25 13 25 28 0 13-1 21-11 22C20 57 1 42 2 20z" fill={c.blue} />
              <path d="M59 0h84c-1 22-10 41-30 50-18 8-40 8-50 1-9-7-7-30-4-51z" fill={c.orange} />
              <text x="91" y="16" fontSize="12.5" textLength="34" fill={c.peach} fontFamily='"Open Sans", sans-serif'>scikit</text>
              <text x="69" y="44" fontSize="39" fontStyle="italic" fontWeight="700" textLength="93" lengthAdjust="spacingAndGlyphs" fill={c.ink} fontFamily='"Liberation Serif", serif'>learn</text>
            </Svg>
          </Logo>
          <Pager>
            <Fit w={34} size={15.5} bold color="#fff">Prev</Fit>
            <Fit w={22} size={15.5} bold color="#fff">Up</Fit>
            <Fit w={37} size={15.5} bold color="#fff">Next</Fit>
          </Pager>
          <Notice $h={66} $bg="#f2dfce">
            <Line><Fit w={149} size={17} bold>scikit-learn 0.24.2</Fit></Line>
            <Line><Fit w={115} size={17} color={c.link}>Other versions</Fit></Line>
          </Notice>
          <Notice $h={66} $bg="#fbe3cd">
            <Line $gap={5}>
              <Fit w={50} size={17} color="#5d6a55">Please</Fit>
              <Fit w={54} size={17} bold color={c.blue}>cite us</Fit>
              <Fit w={107} size={17} color="#5d6a55">if you use the</Fit>
            </Line>
            <Line><Fit w={71} size={17} color="#5d6a55">software.</Fit></Line>
          </Notice>
          <Toc>
            <Line><Fit w={121} size={17} bold color={c.blue}>2.3. Clustering</Fit></Line>
            {toc.map(([t, w]) => (
              <Line key={t}><Fit w={w} size={17} color={c.link}>{t}</Fit></Line>
            ))}
          </Toc>
          <MenuToggle><Fit w={108} size={18}>Toggle Menu</Fit></MenuToggle>
        </Sidebar>

        <Article>
          <Comparison />
          <Caption><Fit w={493} size={18.5}>A comparison of the clustering algorithms in scikit-learn</Fit></Caption>
          <Table>
            <Row>
              {heads.map(([t, w]) => (
                <Cell key={t}><Fit w={w} size={18} bold>{t}</Fit></Cell>
              ))}
            </Row>
            <Row>
              <Cell $col={3}>
                <Fit w={85} size={18}>Very large</Fit>
                <Fit w={91} size={15.5} font='"Liberation Mono", monospace'>n_samples</Fit>
              </Cell>
            </Row>
          </Table>
        </Article>

        <Scroll>
          <Arrow />
          <Thumb />
          <Arrow $down />
        </Scroll>
      </Page>

      <Shelf>
        <Download>
          <TextFile />
          <Fit w={90} size={17}>car_data.txt</Fit>
          <Svg w={12} h={8} stroke={c.green} strokeWidth="2"><path d="M1 7l5-5 5 5" /></Svg>
        </Download>
        <ShowAll><Fit w={60} color={c.blue}>全部显示</Fit></ShowAll>
        <Cross s={12} color={c.green} />
      </Shelf>

      <Taskbar>
        <Task $w={60}><Svg w={20}><path d="M0 3l8.500-1.200v7.700H0zM9.500 1.600L20 0v9.500H9.500zM0 10.500h8.500v7.700L0 17zM9.500 10.500H20V20L9.500 18.400z" fill="#fff" /></Svg></Task>
        <Task $w={60}><Svg w={22} stroke="#fff" strokeWidth="1.5"><circle cx="13.5" cy="8" r="6.8" /><path d="M8.500 13L1 20.500" /></Svg></Task>
        <Task $w={60}><Svg w={20} stroke="#fff" strokeWidth="2.6"><circle cx="10" cy="10" r="8.2" /></Svg></Task>
        <Task $w={61}><Svg w={21} h={20} stroke="#fff" strokeWidth="1.3"><path d="M1 0v3.500h12.500V0M1 6h12.500v8.500H1zM1 20v-3.500h12.500V20M18.500 0v5M18.500 10v10" /><rect x="17.2" y="6" width="2.6" height="3" fill="#fff" stroke="none" /></Svg></Task>
        <Task $w={65} $open>
          <Svg w={26} h={24}><path d="M0 1h9l2 2.500h15V23H0z" fill={c.orange} /><path d="M3 6h20v8H3z" fill={c.peach} opacity=".6" /><path d="M5 23v-7l3-3h10l3 3v7h-4.500v-4h-7v4z" fill={c.blue} /></Svg>
        </Task>
        <Task $w={61} $active $open>
          <Svg w={28} vb="0 0 28 28"><circle cx="14" cy="14" r="13.5" fill={c.green} /><path d="M2.300 7.200A13.500 13.500 0 0127.500 14q0 9-11 13.300L20 17l-6-9z" fill={c.orange} /><path d="M14 .500a13.500 13.500 0 0111.700 6.700H14z" fill={c.orange} /><circle cx="14" cy="14" r="6.6" fill={c.strip} /><circle cx="14" cy="14" r="5" fill={c.blue} /></Svg>
        </Task>
        <Task $open>
          <Svg w={30}><rect width="30" height="30" rx="2" fill={c.strip} /><path d="M0 0h12L0 14z" fill={c.blue} /><path d="M12 0h18v12z" fill={c.grey} /><path d="M0 14h14l8 16H0z" fill={c.peach} /><path d="M3 2l13 13" stroke={c.orange} strokeWidth="3" /><circle cx="16" cy="14" r="4" fill={c.orange} /><path d="M17 16v13l3-3 2.500 5 2-1-2.500-5h4z" fill="#fff" stroke={c.ink} strokeWidth=".7" /></Svg>
        </Task>
        <Task $open>
          <Svg w={29}><rect width="29" height="29" rx="6" fill="#fff" /><text x="14.5" y="22" textAnchor="middle" fontSize="22" fontWeight="700" fill={c.ink} fontFamily='"Liberation Serif", serif'>T</text></Svg>
        </Task>
        <Task $open>
          <Svg w={30}><rect width="30" height="30" rx="5" fill={c.orange} /><path d="M9 5h7q6 .500 6 5.500T16 16h-3q-5 0-6 4t3 4 4-5V9" stroke="#fff" strokeWidth="2" /><text x="13" y="27" fontSize="8" fontWeight="700" fill="#fff" fontFamily="Inter, sans-serif">PDF</text></Svg>
        </Task>
        <Task $open>
          <Svg w={30} h={28}><path d="M15 1l5 4 9 6-4 5-1 6-9 6-9-6-1-6-4-5 9-6z" fill={c.blue} /><path d="M13 7l6 4.500-6 4.500z" fill="#fff" /></Svg>
        </Task>
        <Task $open>
          <Svg w={28} h={24}><rect x=".7" y=".7" width="26.6" height="22.6" stroke={c.grey} fill="#393637" /><path d="M1 2h26" stroke={c.grey} strokeWidth="2" /><text x="3" y="13" fontSize="8" fill="#fff" fontFamily='"Liberation Mono", monospace'>C:\_</text></Svg>
        </Task>
        <Tray>
          <Svg w={16} h={10} stroke="#dfe8df" strokeWidth="1.5"><path d="M1 9l7-7 7 7" /></Svg>
          <Svg w={17} h={20}><rect x="3.5" y=".5" width="10" height="5" fill="#fff" /><path d="M5.500 2h2M10 2h2" stroke={c.ink} strokeWidth="1.5" /><rect y="5" width="17" height="14" rx="5" fill={c.blue} /></Svg>
          <Svg w={21} h={14}><path d="M4 13a4 4 0 010-7 6 6 0 0111-2 4.600 4.600 0 012 9z" fill="#c4c8cc" /><path d="M8 13.500a4 4 0 010-6q4-2 7 0 5-.500 5.500 3t-3 3z" fill="#fff" /></Svg>
          <Svg w={21} h={20} stroke="#fff" strokeWidth="1.2"><path d="M1 3l19-2v17H1zM14 8q-3-4-6 0v5q3 2 5-1M11 8h3V5" /><circle cx="16" cy="15.5" r="4.5" fill={c.orange} stroke="none" /></Svg>
          <Svg w={21} h={15} stroke="#fff" strokeWidth="1.3"><path d="M5.500 4.500H18v9H5v-4M18 7h2v4h-2M1 2.500h4V5q-2 2.500-4 0zM2 0v2M4.500 0v2M3 6v3h2" /><path d="M6.500 6.500h6v5h-6z" fill="#fff" /></Svg>
          <Svg w={21} h={18} stroke="#fff" strokeWidth="1.3"><path d="M5 2h15v11.500H2V7M11 13.500V17M7 17h8M1 1h4v5H1z" /></Svg>
          <Svg w={22} h={18} stroke="#fff" strokeWidth="1.2"><path d="M1 6h3l5-5v16l-5-5H1z" /><path d="M12 6q1.500 3 0 6M15 4q3 5 0 10" /><path d="M18 2q4 7 0 14" stroke={c.green} /></Svg>
          <Svg w={21} stroke="#fff" strokeWidth="1.4"><path d="M14 1l3 1-7 14q-1.500 2-3 1.500T6.500 14zM6 10q-5 1-5 5t4 4q3-1 5-3M13 10q2-2 3.500-.500T20 9" /></Svg>
          <Svg w={20}><path d="M1 3l5-3 13 1v5l1 7-5 6-13 1-2-6 2-5z" fill={c.orange} /><path d="M15.500 5.500Q5 2.500 5 7.500t9 3.500q2.500 5-9.500 3.500" stroke="#fff" strokeWidth="3" /></Svg>
          <Svg w={21} h={21} stroke="#fff" strokeWidth="1.4"><path d="M1 1h19v15.500h-7L10.500 19 8 16.500H1z" /></Svg>
        </Tray>
      </Taskbar>

      <Watermark>
        <Fit w={210} size={33} bold>Python校长</Fit>
        <Svg w={146} h={72} vb="0 -4 146 72">
          <g stroke="#d3d9e1" strokeWidth="1" strokeDasharray="2 1" fill="#fff" fillOpacity=".35" fontFamily='"Open Sans", sans-serif' fontWeight="800">
            <text x="3" y="49" fontSize="46" textLength="132" lengthAdjust="spacingAndGlyphs" transform="rotate(3 70 40)">bilibili</text>
          </g>
        </Svg>
      </Watermark>

      <Meeting>
        <Dot />
        <Fit w={113} size={15.5}>上课中 00:52:49</Fit>
        <MeetingArrow><Svg w={9} h={6} stroke={c.green} strokeWidth="1.8"><path d="M1 1l3.500 3.500L8 1" /></Svg></MeetingArrow>
      </Meeting>

      <Status><Fit w={594} size={15.8}>https://scikit-learn.org/stable/auto_examples/cluster/plot_cluster_comparison.html</Fit></Status>

      <Starter>
        <StarterHead><Fit w={20} size={15} color={c.grey}>P...</Fit></StarterHead>
        <StartButton><Fit w={25} size={12.5} font='"Liberation Sans", sans-serif'>Start</Fit></StartButton>
      </Starter>

      <SideHandle />

      <Overlay $x={1275} $y={663} width="20" height="25" viewBox="0 0 20 25">
        <path d="M6 2.500q0-1.500 1.500-1.500T9 2.500V9q1.500-1 2.700.400 1.500-1 2.600.600 1.700-.800 3.700 1.500v5.500L16 24H8l-2.500-4L1.500 14q-.500-2 1.500-2t3 3z" fill="#fff" stroke={c.ink} strokeWidth="1.3" />
        <path d="M9 9v4M12 10v3M15 11v3" stroke={c.ink} strokeWidth="1" fill="none" />
      </Overlay>

      <Edge $x={0} $y={0} $w={22} $h={2} />
      <Edge $x={0} $y={0} $w={2} $h={23} />
      <Edge $x={1} $y={23} $w={1} $h={987} />
      <Edge $x={0} $y={1009} $w={2} $h={25} />
      <Edge $x={0} $y={1031} $w={23} $h={3} />
      <Edge $x={1897} $y={0} $w={23} $h={2} />
      <Edge $x={1918} $y={0} $w={2} $h={24} />
      <Edge $x={1918} $y={24} $w={1} $h={985} />
      <Edge $x={1918} $y={1009} $w={2} $h={25} />
      <Edge $x={1897} $y={1030} $w={23} $h={4} />
    </Screen>
  );
}
